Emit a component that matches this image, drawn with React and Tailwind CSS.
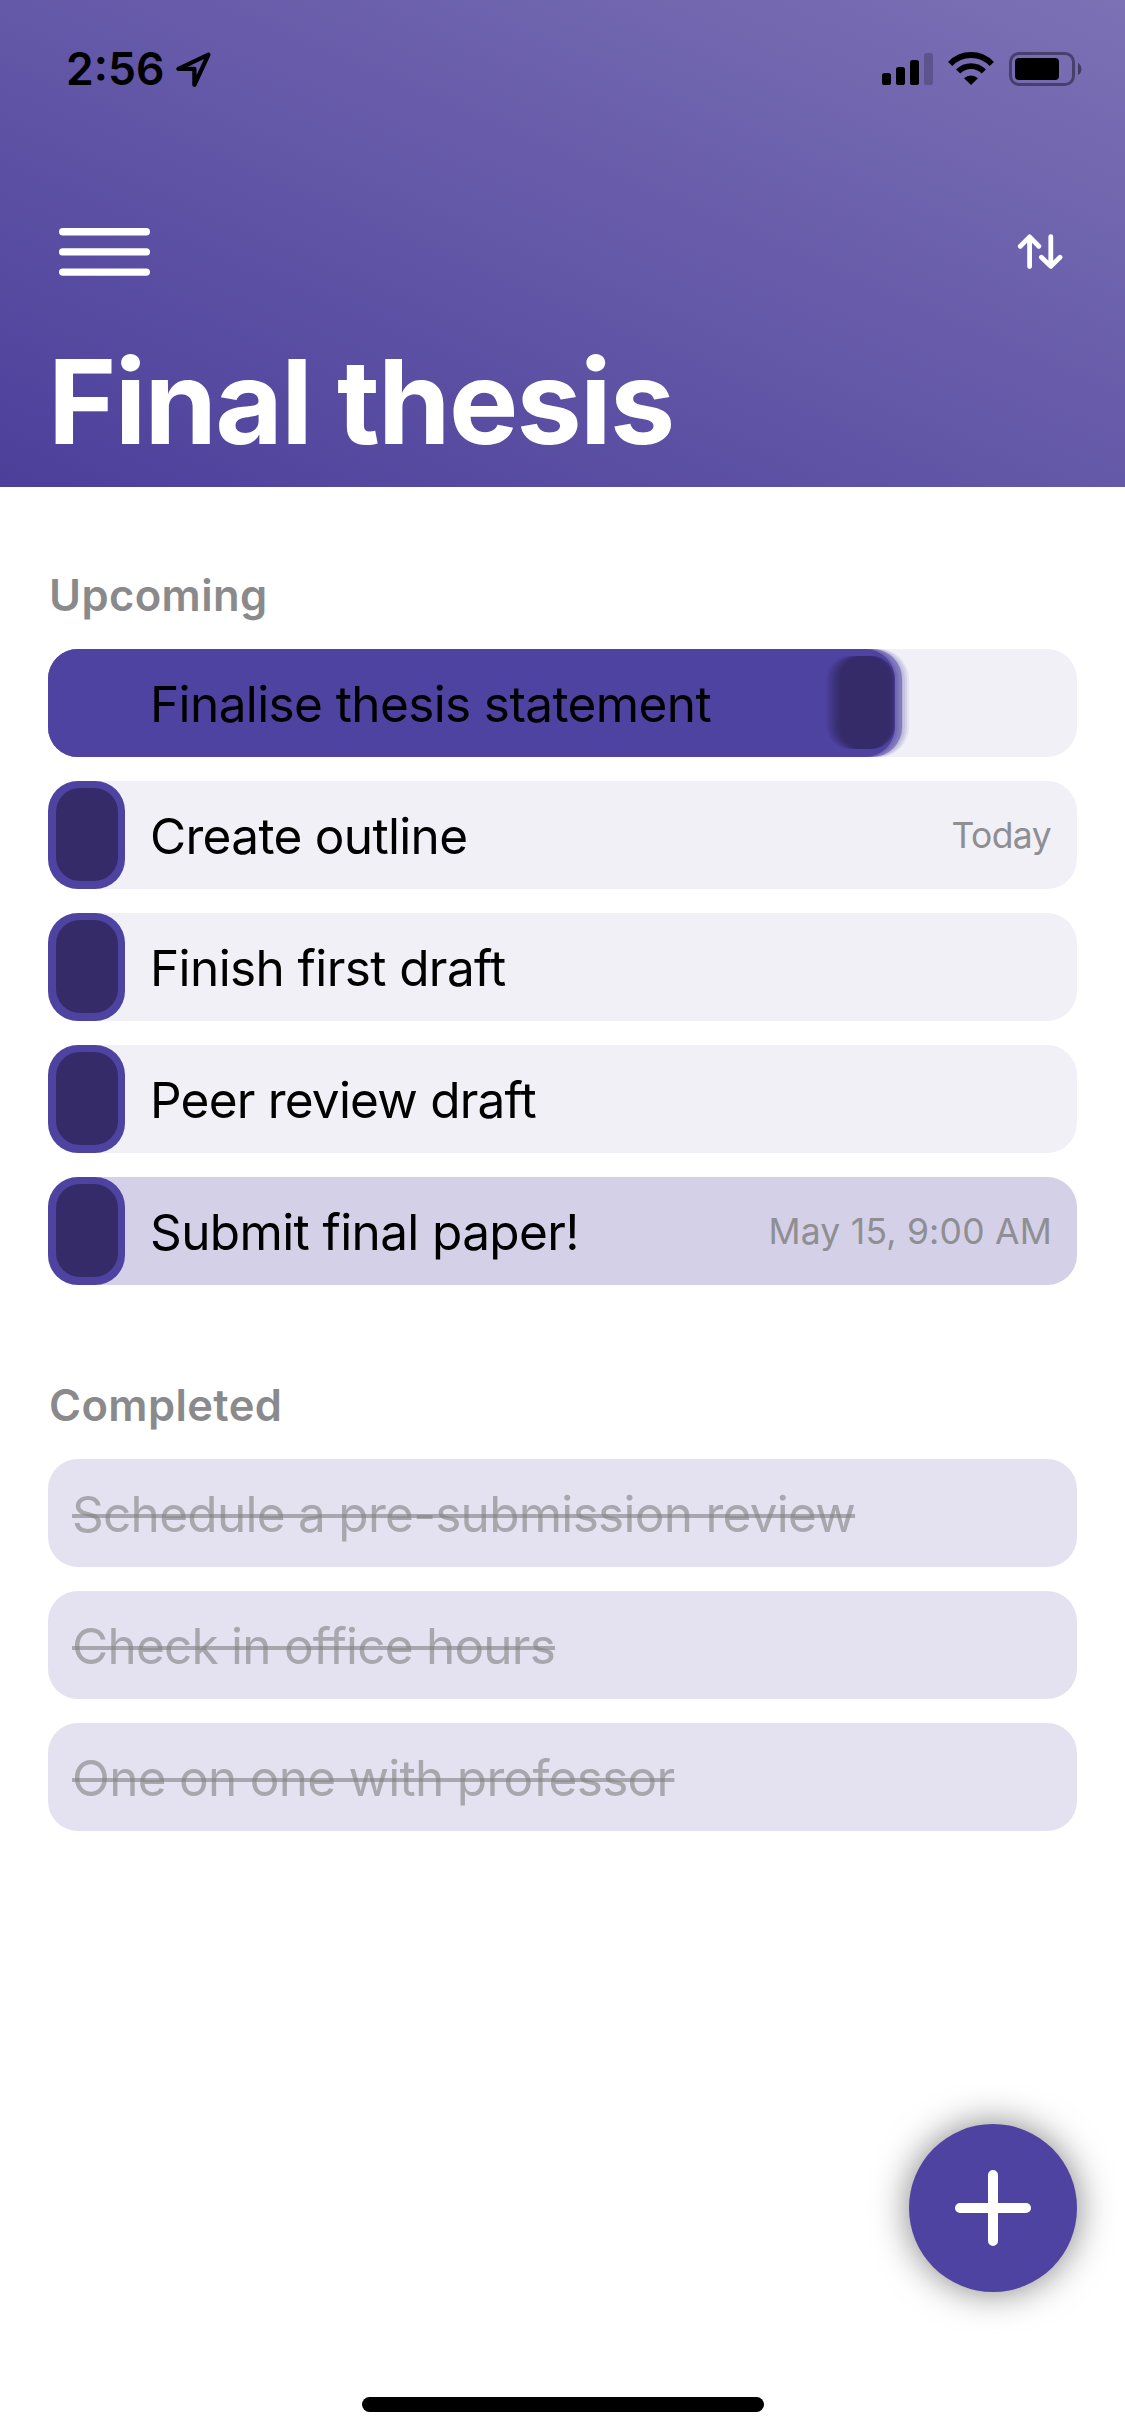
const upcoming = [
  { title: "Finalise thesis statement", tracking: "tracking-[-0.61px]", dragging: true },
  { title: "Create outline", tracking: "tracking-[-0.68px]", due: "Today", dueTracking: "mr-[2px] tracking-[-0.6px]" },
  { title: "Finish first draft", tracking: "tracking-[-0.6px]" },
  { title: "Peer review draft", tracking: "tracking-[-0.78px]" },
  {
    title: "Submit final paper!",
    tracking: "tracking-[-0.62px]",
    due: "May 15, 9:00 AM",
    dueTracking: "mr-px tracking-[0.22px]",
    highlighted: true,
  },
];

const completed = [
  { title: "Schedule a pre-submission review", tracking: "tracking-[-0.72px]" },
  { title: "Check in office hours", tracking: "tracking-[-0.77px]" },
  { title: "One on one with professor", tracking: "tracking-[-0.72px]" },
];

// Trail of the slider while it is being dragged, relative to the row's left edge.
const fillTrail = [
  { width: 861, opacity: 0.08 },
  { width: 859, opacity: 0.1 },
  { width: 857, opacity: 0.1 },
  { width: 855, opacity: 0.12 },
  { width: 854, opacity: 0.5 },
  { width: 851, opacity: 0.15 },
  { width: 849, opacity: 0.25 },
];
const knobTrail = [
  { left: 778, width: 69, opacity: 0.12 },
  { left: 780, width: 67, opacity: 0.16 },
  { left: 782, width: 65, opacity: 0.2 },
  { left: 784, width: 62, opacity: 0.25 },
  { left: 786, width: 60, opacity: 0.3 },
  { left: 788, width: 57, opacity: 0.4 },
  { left: 790, width: 54, opacity: 0.5 },
  { left: 792, width: 50, opacity: 1 },
];

function StatusBar() {
  return (
    <div className="flex h-[138px] items-center justify-between pl-[66px] pr-[43px]">
      <div className="flex items-center">
        <span className="text-[44.5px] leading-[54px] font-semibold">2:56</span>
        <svg className="ml-[10px]" width="38" height="38" viewBox="174 50 38 38" fill="none">
          <path
            d="M208.4 54.6 L178.4 68.9 H194.4 V84.8 Z"
            stroke="black"
            strokeWidth="4.3"
            strokeLinejoin="round"
          />
        </svg>
      </div>
      <svg width="200" height="34" viewBox="882 52 200 34">
        <rect x="882" y="73" width="9" height="12" rx="2.6" />
        <rect x="896" y="67" width="9" height="18" rx="2.6" />
        <rect x="910" y="60" width="9" height="25" rx="2.6" />
        <rect x="924" y="53" width="9" height="32" rx="2.6" opacity="0.2" />
        <path
          d="M950.2 64 A28.5 28.5 0 0 1 991.8 64 M958.2 71.6 A17.5 17.5 0 0 1 983.8 71.6"
          fill="none"
          stroke="black"
          strokeWidth="5.8"
        />
        <path d="M971 85 L964 78.2 A10.3 10.3 0 0 1 978 78.2 Z" />
        <rect x="1010.5" y="53.5" width="63" height="31" rx="8.5" fill="none" stroke="black" strokeOpacity="0.4" strokeWidth="3" />
        <rect x="1015" y="58" width="44" height="22" rx="4" />
        <path d="M1078 62.7 A7.5 7.5 0 0 1 1078 75.3 Z" opacity="0.45" />
      </svg>
    </div>
  );
}

function Header() {
  return (
    <header className="h-[487px] bg-[linear-gradient(to_top_right,#4c3f9b,#7c71b5)]">
      <StatusBar />
      <div className="mt-[80px] flex h-[68px] items-center justify-between pl-[59px] pr-[61px]">
        <svg width="91" height="48" viewBox="0 0 91 48" fill="white">
          <rect x="0" y="0" width="91" height="7.4" rx="3.7" />
          <rect x="0" y="20.2" width="91" height="7.4" rx="3.7" />
          <rect x="0" y="40.4" width="91" height="7.4" rx="3.7" />
        </svg>
        <svg
          width="48"
          height="40"
          viewBox="1016 232 48 40"
          fill="none"
          stroke="white"
          strokeWidth="4.8"
          strokeLinecap="round"
          strokeLinejoin="round"
        >
          <path d="M1029.6 237 V266.5 M1020.3 246.2 L1029.6 236.9 L1038.8 246.2" />
          <path d="M1050.8 236.6 V266 M1041.4 257.2 L1050.8 266.4 L1060 257.2" />
        </svg>
      </div>
      <h1 className="mt-[56px] pl-12 text-[116.5px] leading-[120px] font-bold tracking-[-1.73px] text-white">
        Final thesis
      </h1>
    </header>
  );
}

function Knob() {
  return (
    <div className="h-[108px] w-[77px] rounded-[30px] bg-[#4f43a2] pt-[7px] pl-[7.5px]">
      <div className="h-[93px] w-[62.5px] rounded-[24px] bg-[#352b68]" />
    </div>
  );
}

function DragTrail() {
  return (
    <div className="absolute inset-0">
      {fillTrail.map((f) => (
        <div
          key={f.width}
          className="absolute inset-y-0 left-0 rounded-[30px] bg-[#4f43a2]"
          style={{ width: f.width, opacity: f.opacity }}
        />
      ))}
      <div className="absolute inset-y-0 left-0 w-[847px] rounded-[30px] bg-[#4f43a2]" />
      {knobTrail.map((k) => (
        <div
          key={k.left}
          className="absolute top-[7px] h-[93px] rounded-[24px] bg-[#352b68]"
          style={{ left: k.left, width: k.width, opacity: k.opacity }}
        />
      ))}
    </div>
  );
}

function TaskRow({ task }) {
  return (
    <li
      className={`relative flex h-[108px] items-center rounded-[30px] pr-6 ${
        task.highlighted ? "bg-[#d4d0e7]" : "bg-[#f1f0f6]"
      }`}
    >
      {task.dragging ? (
        <>
          <DragTrail />
          <div className="w-[77px]" />
        </>
      ) : (
        <Knob />
      )}
      <span className={`relative ml-[25px] grow pt-0.5 text-[49.5px] leading-[60px] ${task.tracking}`}>
        {task.title}
      </span>
      {task.due && (
        <span className={`pt-0.5 text-[35.5px] leading-[44px] text-[#8e8e93] ${task.dueTracking}`}>{task.due}</span>
      )}
    </li>
  );
}

function SectionTitle({ children }) {
  return (
    <h2 className="mb-[27px] pl-px text-[43.5px] leading-[54px] font-semibold tracking-[0.4px] text-[#8a8a8c]">
      {children}
    </h2>
  );
}

export default function App() {
  return (
    <div className="flex h-[2436px] w-[1125px] flex-col bg-white font-['Inter','Liberation_Sans',sans-serif] text-black">
      <Header />
      <main className="grow px-12">
        <section className="pt-[81px]">
          <SectionTitle>Upcoming</SectionTitle>
          <ul className="flex flex-col gap-6">
            {upcoming.map((task) => (
              <TaskRow key={task.title} task={task} />
            ))}
          </ul>
        </section>
        <section className="pt-[93px]">
          <SectionTitle>Completed</SectionTitle>
          <ul className="flex flex-col gap-6">
            {completed.map((task) => (
              <li key={task.title} className="flex h-[108px] items-center rounded-[30px] bg-[#e4e2f0] px-6">
                <span
                  className={`pt-0.5 text-[49.5px] leading-[60px] text-[#80808099] line-through decoration-[4px] ${task.tracking}`}
                >
                  {task.title}
                </span>
              </li>
            ))}
          </ul>
        </section>
      </main>
      <div className="flex justify-end pr-12">
        <button
          aria-label="Add task"
          className="flex h-[168px] w-[168px] items-center justify-center rounded-full bg-[#4f43a2] shadow-[0_0_36px_rgba(0,0,0,0.5)]"
        >
          <svg width="76" height="76" viewBox="0 0 76 76" stroke="white" strokeWidth="10" strokeLinecap="round">
            <path d="M38 5 V71 M5 38 H71" />
          </svg>
        </button>
      </div>
      <div className="mt-[105px] mb-6 h-[15px] w-[402px] self-center rounded-full bg-black" />
    </div>
  );
}
